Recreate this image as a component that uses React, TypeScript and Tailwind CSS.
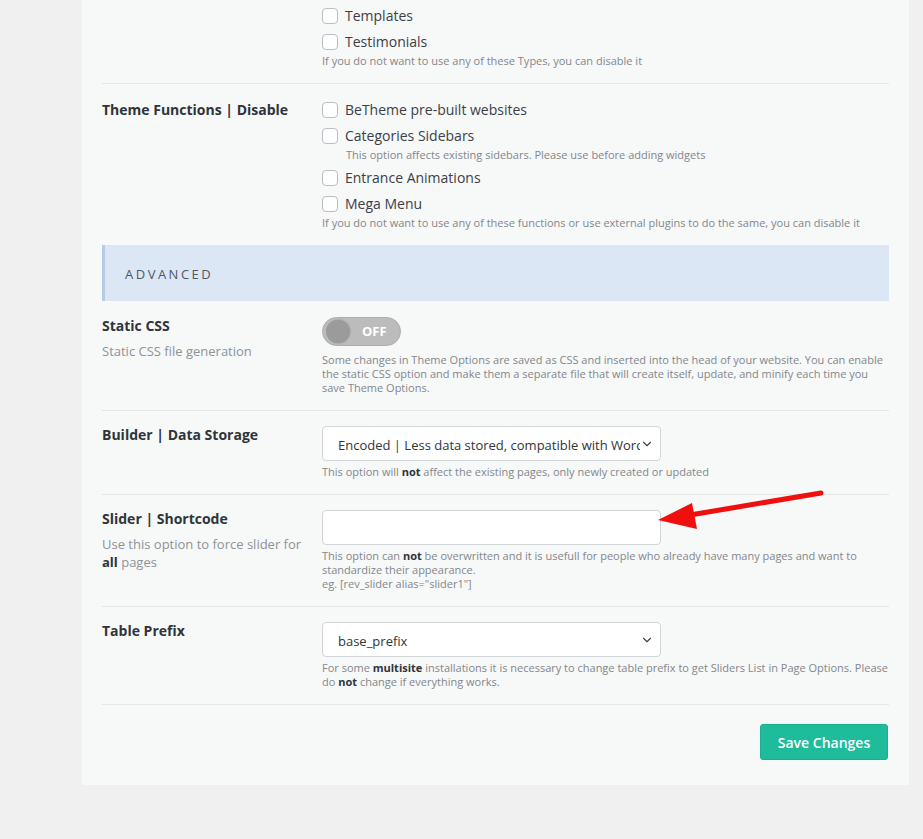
import React from 'react';
import { ChevronDown } from 'lucide-react';

const font = { fontFamily: '"Open Sans", "Liberation Sans", sans-serif' };

const Check = ({ label, note }: { label: string; note?: string }) => (
  <div>
    <label className="flex items-center h-5 gap-[7px] text-[14px] leading-[19px] text-[#3b4047]">
      <span className="w-4 h-4 rounded-[4px] border border-[#b9bdc1] bg-white shrink-0"></span>
      <span className="-mt-[1px]">{label}</span>
    </label>
    {note && <p className="mt-[2px] pl-[24px] text-[11px] leading-[14px] text-[#83878c]">{note}</p>}
  </div>
);

const Help = ({ children, className = '' }: { children: React.ReactNode; className?: string }) => (
  <p className={`text-[11px] leading-[14px] text-[#83878c] ${className}`}>{children}</p>
);

const B = ({ children }: { children: React.ReactNode }) => (
  <b className="font-bold text-[#2f353b]">{children}</b>
);

const Select = ({ value }: { value: string }) => (
  <div className="w-[339px] h-[35px] bg-white border border-[#d3d6d9] rounded-[4px] flex items-center pl-[15px] pr-[6px]">
    <span className="flex-1 overflow-hidden whitespace-nowrap text-[13px] leading-[18px] pt-[3px] text-[#2f353b]">{value}</span>
    <ChevronDown size={14} strokeWidth={2} className="text-[#444] shrink-0" />
  </div>
);

const Row = ({ label, desc, children, border = true }: { label?: string; desc?: React.ReactNode; children: React.ReactNode; border?: boolean }) => (
  <div className={`flex pt-[15px] pb-[15px] ${border ? 'border-b border-[#e4e7e8]' : ''}`}>
    <div className="w-[220px] pr-[18px] shrink-0">
      {label && <h3 className="text-[14px] leading-[17px] font-bold text-[#2f353b]">{label}</h3>}
      {desc && <p className="mt-[8px] text-[13px] leading-[18px] text-[#8d9399]">{desc}</p>}
    </div>
    <div className="flex-1">{children}</div>
  </div>
);

export default function App() {
  return (
    <div className="min-h-[839px] bg-[#f0f0f0] relative" style={font}>
      <div className="ml-[82px] w-[827px] bg-[#f7f8f8] px-[20px] pb-[25px]">
        <div className="flex pt-[6px] pb-[15px] border-b border-[#e4e7e8]">
          <div className="w-[220px] shrink-0"></div>
          <div className="flex-1 flex flex-col gap-[6px]">
            <Check label="Templates" />
            <Check label="Testimonials" />
            <Help className="-mt-[4px]">If you do not want to use any of these Types, you can disable it</Help>
          </div>
        </div>

        <div className="flex pt-[16px] pb-[15px]">
          <div className="w-[220px] shrink-0 pt-[1px]">
            <h3 className="text-[14px] leading-[17px] font-bold text-[#2f353b]">Theme Functions | Disable</h3>
          </div>
          <div className="flex-1 flex flex-col gap-[6px]">
            <Check label="BeTheme pre-built websites" />
            <Check label="Categories Sidebars" note="This option affects existing sidebars. Please use before adding widgets" />
            <Check label="Entrance Animations" />
            <Check label="Mega Menu" />
            <Help className="-mt-[4px]">If you do not want to use any of these functions or use external plugins to do the same, you can disable it</Help>
          </div>
        </div>

        <div className="h-[56px] bg-[#dce7f6] border-l-[3px] border-[#b8cbe5] flex items-center pl-[20px] pt-[3px]">
          <span className="text-[13px] tracking-[2.5px] text-[#4f5862]">ADVANCED</span>
        </div>

        <div className="flex pt-[16px] pb-[15px] border-b border-[#e4e7e8]">
          <div className="w-[220px] shrink-0">
            <h3 className="text-[14px] leading-[17px] font-bold text-[#2f353b]">Static CSS</h3>
            <p className="mt-[7px] text-[13px] leading-[20px] text-[#8d9399]">Static CSS file generation</p>
          </div>
          <div className="flex-1">
            <div className="w-[79px] h-[29px] rounded-full bg-[#bcbcbc] border border-[#adadad] flex items-center pl-[3px]">
              <span className="w-[23px] h-[23px] rounded-full bg-[#9b9b9b] shadow-[1px_0_2px_rgba(0,0,0,0.25)]"></span>
              <span className="ml-[13px] text-[13px] font-bold text-white">OFF</span>
            </div>
            <Help className="mt-[7px]">
              Some changes in Theme Options are saved as CSS and inserted into the head of your website. You can enable the static CSS option and make them a separate file that will create itself, update, and minify each time you save Theme Options.
            </Help>
          </div>
        </div>

        <Row label="Builder | Data Storage">
          <Select value="Encoded | Less data stored, compatible with WordPress" />
          <Help className="mt-[4px]">This option will <B>not</B> affect the existing pages, only newly created or updated</Help>
        </Row>

        <Row label="Slider | Shortcode" desc={<>Use this option to force slider for <B>all</B> pages</>}>
          <div className="w-[339px] h-[35px] bg-white border border-[#d3d6d9] rounded-[4px]"></div>
          <Help className="mt-[4px]">
            This option can <B>not</B> be overwritten and it is usefull for people who already have many pages and want to standardize their appearance.
            <br />
            eg. [rev_slider alias="slider1"]
          </Help>
        </Row>

        <Row label="Table Prefix">
          <Select value="base_prefix" />
          <Help className="mt-[4px]">
            For some <B>multisite</B> installations it is necessary to change table prefix to get Sliders List in Page Options. Please do <B>not</B> change if everything works.
          </Help>
        </Row>

        <div className="flex justify-end pt-[19px] pr-[1px]">
          <button className="w-[128px] h-[36px] rounded-[3px] bg-[#1fbc9c] border border-[#1aae8f] text-white text-[14px] font-semibold">
            Save Changes
          </button>
        </div>
      </div>

      <svg className="absolute left-0 top-0 pointer-events-none" width="923" height="839">
        <line x1="821" y1="493" x2="690" y2="515" stroke="#f00f0f" strokeWidth="5" strokeLinecap="round" />
        <polygon points="658,520 692,503 697,529" fill="#f00f0f" />
      </svg>
    </div>
  );
}
